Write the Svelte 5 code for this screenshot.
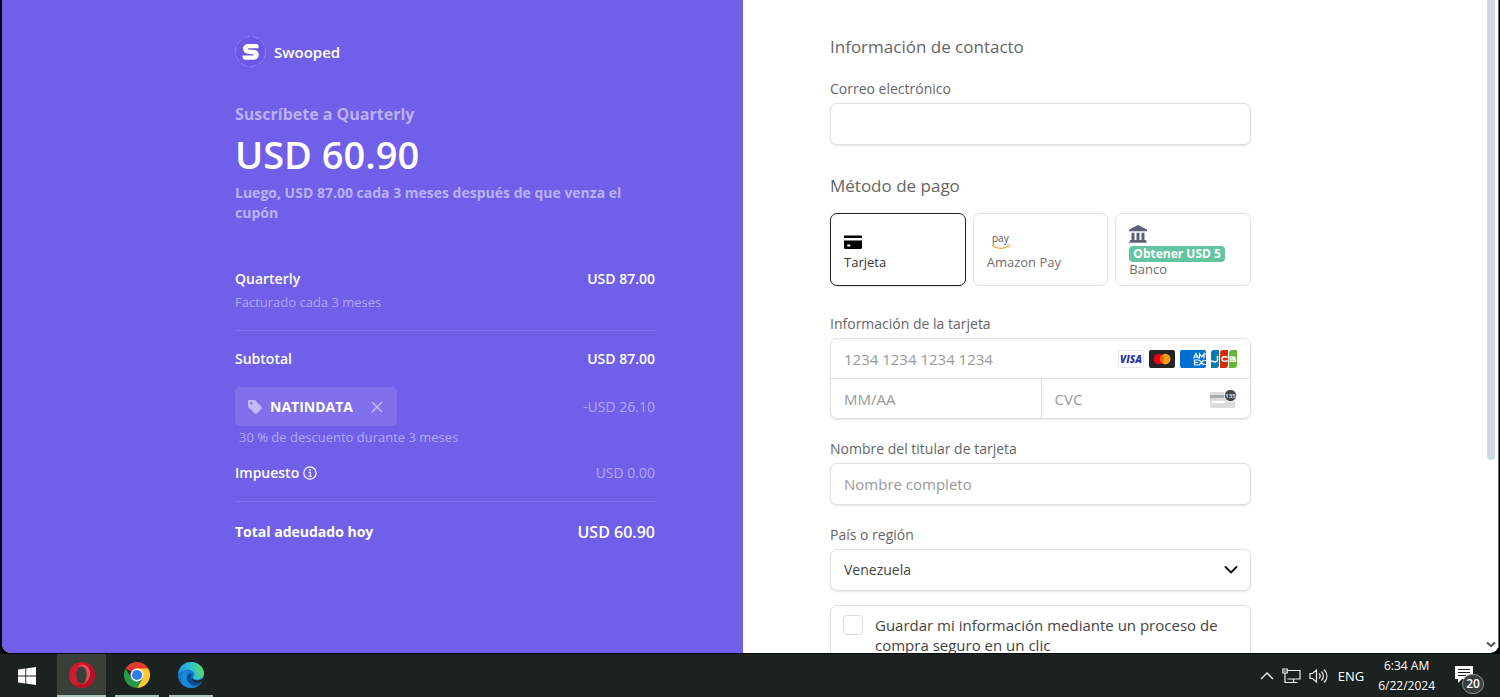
<script>
    const methods = [
        { id: 'card', label: 'Tarjeta' },
        { id: 'amazon', label: 'Amazon Pay' },
        { id: 'bank', label: 'Banco', badge: 'Obtener USD 5' }
    ];

    let selected = 'card';
    let coupon = true;
    let save = false;
</script>

<div class="desktop">
    <main class="window">
        <section class="summary">
            <div class="column">
                <header class="brand">
                    <svg class="brand-logo" viewBox="0 0 31 31" aria-hidden="true">
                        <circle cx="15.500" cy="15.500" r="15" fill="#6b58e6" stroke="#8f80f2" stroke-dasharray="7 2" />
                        <path d="M23.500 12.300H13.800c-1.500 0-1.500 1.100 0 1.200l5.700.5c6 .5 5.600 9.700-.8 9.700H10c-2 0-2.600-1.800-2.400-4.200h10c1.500 0 1.500-1.200 0-1.300l-4.700-.4C6.300 17.200 6.500 8 13.200 8h8c2.200 0 2.700 1.900 2.300 4.300z" fill="#fff" />
                    </svg>
                    <span>Swooped</span>
                </header>

                <h1>Suscríbete a Quarterly</h1>
                <p class="price">USD 60.90</p>
                <p class="then">Luego, USD 87.00 cada 3 meses después de que venza el cupón</p>

                <div class="line item">
                    <span>Quarterly</span>
                    <span>USD 87.00</span>
                </div>
                <p class="note">Facturado cada 3 meses</p>

                <div class="line subtotal">
                    <span>Subtotal</span>
                    <span>USD 87.00</span>
                </div>

                {#if coupon}
                    <div class="line discount">
                        <div class="chip">
                            <svg width="14" height="14" viewBox="0 0 14 14" aria-hidden="true">
                                <path fill-rule="evenodd" d="M0 1.500C0 .7.7 0 1.500 0h4.700c.4 0 .8.2 1.100.5l6.200 6.200c.6.600.6 1.500 0 2.100l-4.700 4.700c-.6.600-1.500.6-2.100 0L.5 7.300C.2 7 0 6.600 0 6.200zM3.300 4.600a1.300 1.300 0 1 0 0-2.600 1.300 1.300 0 0 0 0 2.600z" fill="#c3bbf7" />
                            </svg>
                            <span>NATINDATA</span>
                            <button type="button" aria-label="Quitar cupón" on:click={() => (coupon = false)}>
                                <svg width="12" height="12" viewBox="0 0 12 12">
                                    <path d="M1 1l10 10M11 1L1 11" stroke="#c3bbf7" stroke-width="1.500" fill="none" />
                                </svg>
                            </button>
                        </div>
                        <span>-USD 26.10</span>
                    </div>
                    <p class="note coupon-note">30 % de descuento durante 3 meses</p>
                {/if}

                <div class="line tax">
                    <span class="tax-label">
                        Impuesto
                        <svg width="14" height="14" viewBox="0 0 14 14" aria-hidden="true">
                            <circle cx="7" cy="7" r="6.200" fill="none" stroke="#fff" stroke-width="1.200" />
                            <path d="M5.500 6.200h1.800v3.900M5.300 10.200h3.600" fill="none" stroke="#fff" stroke-width="1.100" />
                            <circle cx="7" cy="4" r=".9" fill="#fff" />
                        </svg>
                    </span>
                    <span class="muted">USD 0.00</span>
                </div>

                <div class="line total">
                    <span>Total adeudado hoy</span>
                    <span class="total-amount">USD 60.90</span>
                </div>
            </div>
        </section>

        <section class="checkout">
            <form class="column">
                <h2>Información de contacto</h2>
                <label class="title" for="email">Correo electrónico</label>
                <input class="box" id="email" type="email" />

                <h2 class="pay-title">Método de pago</h2>
                <div class="methods">
                    {#each methods as method}
                        <button
                            type="button"
                            class="method"
                            class:selected={selected === method.id}
                            aria-pressed={selected === method.id}
                            on:click={() => (selected = method.id)}
                        >
                            {#if method.id === 'card'}
                                <svg width="18" height="18" viewBox="0 0 18 18" aria-hidden="true">
                                    <path d="M0 2.500h18v2.500H0z" />
                                    <path fill-rule="evenodd" d="M0 7.500h18v7.300c0 .7-.5 1.200-1.200 1.200H1.200C.5 16 0 15.500 0 14.800zM3.300 11.500v2h3v-2z" />
                                </svg>
                            {:else if method.id === 'amazon'}
                                <svg class="amazon" width="28" height="18" viewBox="0 0 28 18" aria-hidden="true">
                                    <text x="5" y="9" font-size="10" fill="#4c5664">pay</text>
                                    <path d="M5 12.300c5 3.800 11.500 3.600 16.500.8" fill="none" stroke="#f5a93b" stroke-width="1.300" />
                                    <path d="M19.800 11.900c1.500-.4 3-.3 3.200.1.200.5-.2 1.700-1.100 2.600" fill="none" stroke="#f5a93b" stroke-width=".9" />
                                </svg>
                            {:else}
                                <svg width="18" height="18" viewBox="0 0 18 18" aria-hidden="true">
                                    <path d="M9 0l9 4.500v1.700H0V4.500zM2.500 7.700h3v7.500h-3zM7.500 7.700h3v7.500h-3zM12.500 7.700h3v7.500h-3zM1.200 15h15.600l1.200 2.700H0z" fill="#5d6178" />
                                </svg>
                            {/if}
                            {#if method.badge}
                                <span class="badge">{method.badge}</span>
                            {/if}
                            <span>{method.label}</span>
                        </button>
                    {/each}
                </div>

                <label class="title" for="number">Información de la tarjeta</label>
                <div class="card-fields">
                    <div class="card-row">
                        <input id="number" type="text" placeholder="1234 1234 1234 1234" />
                        <div class="brands">
                            <svg width="26" height="18" viewBox="0 0 26 18" role="img" aria-label="Visa">
                                <rect x=".5" y=".5" width="25" height="17" rx="2" fill="#fff" stroke="#e3e5ea" />
                                <text x="13" y="13" font-size="10" font-weight="800" font-style="italic" text-anchor="middle" fill="#2a35a5">VISA</text>
                            </svg>
                            <svg width="26" height="18" viewBox="0 0 26 18" role="img" aria-label="Mastercard">
                                <rect width="26" height="18" rx="2" fill="#252525" />
                                <circle cx="9.700" cy="9" r="5.200" fill="#eb001b" />
                                <circle cx="16.300" cy="9" r="5.200" fill="#f79e1b" />
                                <path d="M13 5a5.200 5.200 0 0 1 0 8 5.200 5.200 0 0 1 0-8z" fill="#ff5f00" />
                            </svg>
                            <svg width="26" height="18" viewBox="0 0 26 18" role="img" aria-label="American Express">
                                <rect width="26" height="18" rx="2" fill="#016fd0" />
                                <path d="M13.500 8.500L16 3.500l2.500 5M14.500 7h3M19.500 8.500V3.800l2.200 3 2.300-3v4.700M26 4h-2M14.500 15v-5h4M14.500 12.500h3.500M14.500 15h4.500M19 10l5 5M24 10l-5 5M24.500 10.500H26M24.500 14.500H26" fill="none" stroke="#fff" stroke-width="1.200" />
                            </svg>
                            <svg width="26" height="18" viewBox="0 0 26 18" role="img" aria-label="JCB">
                                <path d="M3 0h5v15a3 3 0 0 1-3 3H0V3a3 3 0 0 1 3-3z" fill="#047ab1" />
                                <path d="M12 0h5v15a3 3 0 0 1-3 3H9V3a3 3 0 0 1 3-3z" fill="#d42d06" />
                                <path d="M21 0h5v15a3 3 0 0 1-3 3h-5V3a3 3 0 0 1 3-3z" fill="#67b637" />
                                <path d="M6.500 6v4c0 2-3 2.300-6.500 1M16.500 7.300c-3-1.200-5.600-.8-5.600 1.700s2.600 2.900 5.600 1.700M18.500 7h4c2 0 2 2 0 2h-4 4.500c2 0 2 2.300 0 2.300h-4.500" fill="none" stroke="#fff" stroke-width="1.500" />
                            </svg>
                        </div>
                    </div>
                    <div class="card-row split">
                        <input type="text" placeholder="MM/AA" aria-label="Vencimiento" />
                        <div class="cvc">
                            <input type="text" placeholder="CVC" aria-label="CVC" />
                            <svg width="28" height="20" viewBox="0 0 28 20" aria-hidden="true">
                                <rect x="1" y="3" width="25" height="16" rx="2" fill="#dcdcdc" />
                                <path d="M1 6h25v3H1z" fill="#aaa" />
                                <path d="M3 12h13v2H3z" fill="#fff" />
                                <circle cx="21.500" cy="6.500" r="6.500" fill="#fff" />
                                <circle cx="21.500" cy="6.500" r="5.700" fill="#484848" />
                                <text x="21.500" y="9" font-size="6" font-weight="600" text-anchor="middle" fill="#fff">135</text>
                            </svg>
                        </div>
                    </div>
                </div>

                <label class="title" for="name">Nombre del titular de tarjeta</label>
                <input class="box" id="name" type="text" placeholder="Nombre completo" />

                <label class="title" for="country">País o región</label>
                <div class="select">
                    <select class="box" id="country">
                        <option>Venezuela</option>
                    </select>
                    <svg width="14" height="8" viewBox="0 0 14 8" aria-hidden="true">
                        <path d="M1.500 1L7 6.500 12.500 1" fill="none" stroke="#111" stroke-width="1.800" stroke-linecap="round" />
                    </svg>
                </div>

                <label class="save">
                    <input type="checkbox" bind:checked={save} />
                    <span>Guardar mi información mediante un proceso de compra seguro en un clic</span>
                </label>
            </form>
        </section>

        <div class="scrollbar">
            <div class="thumb"></div>
            <svg width="10" height="7" viewBox="0 0 10 7" aria-hidden="true">
                <path d="M1 1.500l4 3.700 4-3.700" fill="none" stroke="#555" stroke-width="2" />
            </svg>
        </div>
    </main>

    <footer class="taskbar">
        <button class="app" aria-label="Inicio">
            <svg width="18" height="18" viewBox="0 0 18 18">
                <path d="M0 2.600l7.300-1v7H0zM8.200 1.400L18 0v8.600H8.200zM0 9.500h7.300v7L0 15.500zM8.200 9.500H18V18l-9.800-1.400z" fill="#fff" />
            </svg>
        </button>
        <button class="app open active" aria-label="Opera">
            <svg width="26" height="26" viewBox="0 0 26 26">
                <circle cx="13" cy="13" r="13" fill="#d3192c" />
                <path d="M15 .5c14 1 15 24 0 25.300-4 .2-7-1-9-3.300 9 3 15-9 9-22z" fill="#b51226" />
                <path d="M9 4.500c5-4 11-1 12 5 1 8-5 14-11 12 8 0 9-15-1-17z" fill="#ea4c57" />
                <ellipse cx="12.500" cy="13" rx="5.200" ry="8.800" fill="#384039" />
            </svg>
        </button>
        <button class="app open" aria-label="Chrome">
            <svg width="26" height="26" viewBox="0 0 26 26">
                <path d="M13 13L1.740 6.500A13 13 0 0 1 24.260 6.500z" fill="#e33b2e" />
                <path d="M13 6.500h11.260A13 13 0 0 1 13 26l5.600-9.700z" fill="#fcc934" />
                <path d="M1.740 6.500A13 13 0 0 0 13 26l5.600-9.700L13 13l-5.600 3.300z" fill="#269a4b" />
                <circle cx="13" cy="13" r="6.500" fill="#fff" />
                <circle cx="13" cy="13" r="5.100" fill="#2f7de9" />
            </svg>
        </button>
        <button class="app open" aria-label="Edge">
            <svg width="26" height="26" viewBox="0 0 26 26">
                <defs>
                    <linearGradient id="wave" x1="0" y1="0.500" x2="1" y2="0.300">
                        <stop offset="0" stop-color="#1f94dd" />
                        <stop offset=".5" stop-color="#2fc1d6" />
                        <stop offset="1" stop-color="#63d957" />
                    </linearGradient>
                </defs>
                <circle cx="13" cy="13" r="13" fill="#1476cc" />
                <path d="M0 12C1 4 7 0 13 0c8 0 13 6 13 11 0 4-3 6.500-6.500 6.500-3 0-5-1-4-2.500 3-5-3-8-7-7-4 .800-7 2-8.500 4z" fill="url(#wave)" />
                <path d="M9 13c-2 7 3 12 10 11.500-6 3.500-15 .5-16-7C2.500 13 6 9 11 9c-1 1-2 2-2 4z" fill="#1a8bdc" />
                <path d="M12 11.500c-3.500 2-4 6-1 9.500 3 3.300 9 3.500 13-1.500-3 1.500-8 1.500-10-1.500-1.500-2-1-3 .2-5z" fill="#0b4a94" />
                <path d="M15 16c-.8 1.300 1.500 2.600 4.500 2.500 3 0 5.500-1.500 6.500-4.500 0 2-.6 4-1.800 5.500-3 1.500-7.200 1.300-9.200-.5-1-1-1-2 0-3z" fill="#1d211e" />
            </svg>
        </button>

        <div class="tray">
            <svg width="14" height="8" viewBox="0 0 14 8" aria-hidden="true">
                <path d="M1 7l6-6 6 6" fill="none" stroke="#eee" stroke-width="1.400" />
            </svg>
            <svg width="19" height="16" viewBox="0 0 19 16" aria-hidden="true">
                <path d="M6 2.500h12v8.500H5.500M11.500 11v3.500M7.500 14.500h8" fill="none" stroke="#eee" stroke-width="1.200" />
                <path d="M.8 1h4.500v4H.8zM3 5v9.500h5M1.800 3h2.500" fill="none" stroke="#eee" stroke-width="1.200" />
            </svg>
            <svg width="19" height="16" viewBox="0 0 19 16" aria-hidden="true">
                <path d="M1 5.500h2.500L7.500 2v12l-4-3.500H1zM10 5.500c1.500 1.500 1.500 3.500 0 5M12.500 3.500c2.500 2.500 2.500 6.500 0 9M15 1.500c4 4 4 9 0 13" fill="none" stroke="#eee" stroke-width="1.200" />
            </svg>
            <span class="lang">ENG</span>
            <time>6:34 AM<br />6/22/2024</time>
            <div class="alerts">
                <svg width="18" height="17" viewBox="0 0 18 17" aria-hidden="true">
                    <path d="M0 0h18v13H7l-4 4v-4H0z" fill="#fff" />
                    <path d="M3 3.500h12M3 6.500h12M3 9.500h8" stroke="#1c221f" stroke-width="1.200" />
                </svg>
                <span class="count">20</span>
            </div>
        </div>
    </footer>
</div>

<style>
    :global(body) {
        background: #05060a;
    }
    .desktop {
        display: flex;
        flex-direction: column;
        height: 100vh;
        overflow: hidden;
        font-family: "Open Sans", "Noto Sans", sans-serif;
        font-size: 14px;
        line-height: 20px;
    }
    .desktop * {
        box-sizing: border-box;
    }
    h1, h2, p {
        margin: 0;
    }
    button, input, select {
        font: inherit;
    }
    svg {
        flex: none;
    }

    .window {
        display: flex;
        flex: 1;
        min-height: 0;
        margin: 0 1px 1px 2px;
        overflow: hidden;
        background: #fff;
        border-radius: 0 0 9px 9px;
    }
    .summary, .checkout {
        display: flex;
        flex: 1;
        min-width: 0;
    }
    .summary {
        justify-content: flex-end;
        padding: 36px 88px 0 24px;
        background: #705fe8;
        color: #fff;
    }
    .checkout {
        padding: 35px 24px 0 87px;
        color: #666;
    }
    .column {
        width: 100%;
        max-width: 420px;
    }
    form.column {
        max-width: 421px;
    }

    /* order summary */
    .brand {
        display: flex;
        align-items: center;
        gap: 8px;
        font-size: 15px;
        font-weight: 600;
    }
    .brand-logo {
        width: 31px;
        height: 31px;
    }
    h1 {
        margin-top: 35px;
        color: #bab1f6;
        font-size: 16px;
        font-weight: 700;
        line-height: 24px;
    }
    .price {
        margin-top: 4px;
        font-size: 38px;
        font-weight: 600;
        line-height: 48px;
    }
    .then {
        margin-top: 5px;
        color: #bab1f6;
        font-weight: 700;
    }
    .line {
        display: flex;
        align-items: center;
        justify-content: space-between;
        font-weight: 600;
    }
    .item {
        margin-top: 46px;
    }
    .note {
        margin-top: 3px;
        color: #b3a9f5;
        font-size: 13px;
    }
    .subtotal {
        margin-top: 18px;
        padding-top: 18px;
        border-top: 1px solid #8071ee;
    }
    .discount {
        margin-top: 18px;
        color: #b3a9f5;
        font-weight: 400;
    }
    .chip {
        display: flex;
        align-items: center;
        gap: 8px;
        height: 39px;
        padding: 0 14px 0 13px;
        background: #8070eb;
        border-radius: 5px;
        color: #fff;
        font-weight: 700;
    }
    .chip button {
        display: flex;
        margin-left: 10px;
        padding: 0;
        background: none;
        border: 0;
        cursor: pointer;
    }
    .coupon-note {
        margin-top: 1px;
        padding-left: 4px;
    }
    .tax {
        margin-top: 16px;
        font-weight: 400;
    }
    .tax-label {
        display: flex;
        align-items: center;
        gap: 4px;
        font-weight: 600;
    }
    .muted {
        color: #b3a9f5;
    }
    .total {
        margin-top: 18px;
        padding-top: 20px;
        border-top: 1px solid #8071ee;
        font-weight: 700;
    }
    .total-amount {
        font-size: 16px;
        font-weight: 600;
    }

    /* payment form */
    h2 {
        font-size: 17px;
        font-weight: 500;
        line-height: 24px;
    }
    .title {
        display: block;
        margin: 20px 0 4px;
    }
    .pay-title {
        margin-top: 29px;
    }
    .box {
        display: block;
        width: 100%;
        height: 42px;
        padding: 0 13px;
        background: #fff;
        border: 1px solid #e0e0e0;
        border-radius: 7px;
        box-shadow: 0 1px 2px #0000001a;
        color: #444;
        appearance: none;
    }
    form input {
        font-size: 15px;
    }
    input::placeholder {
        color: #999;
        opacity: 1;
    }
    .methods {
        display: grid;
        grid-template-columns: repeat(3, 1fr);
        gap: 7px;
        margin: 15px 0 28px;
    }
    .method {
        display: flex;
        flex-direction: column;
        align-items: flex-start;
        justify-content: center;
        gap: 3px;
        height: 73px;
        padding: 3px 13px 0;
        background: #fff;
        border: 1px solid #e4e4e4;
        border-radius: 7px;
        color: #707070;
        font-size: 13px;
        line-height: 16px;
        cursor: pointer;
    }
    .method.selected {
        border-color: #222;
        box-shadow: 0 1px 2px #0000001a;
        color: #333;
    }
    .amazon {
        overflow: visible;
    }
    .badge {
        padding: 0 4px;
        background: #62c5a0;
        border-radius: 4px;
        color: #fff;
        font-size: 12px;
        font-weight: 700;
    }
    .badge + span {
        margin-top: -4px;
    }
    .card-fields {
        overflow: hidden;
        border: 1px solid #e0e0e0;
        border-radius: 7px;
        box-shadow: 0 1px 2px #0000001a;
    }
    .card-row {
        display: flex;
        align-items: center;
        height: 39px;
    }
    .card-row input {
        flex: 1;
        min-width: 0;
        height: 100%;
        padding: 0 13px;
        background: none;
        border: 0;
    }
    .brands {
        display: flex;
        gap: 5px;
        padding-right: 13px;
    }
    .split {
        display: grid;
        grid-template-columns: 1fr 1fr;
        height: 40px;
        border-top: 1px solid #e0e0e0;
    }
    .cvc {
        display: flex;
        align-items: center;
        height: 100%;
        min-width: 0;
        padding-right: 13px;
        border-left: 1px solid #e0e0e0;
    }
    .select {
        display: grid;
        align-items: center;
    }
    .select > * {
        grid-area: 1 / 1;
    }
    .select svg {
        justify-self: end;
        margin-right: 13px;
        pointer-events: none;
    }
    .save {
        display: flex;
        align-items: flex-start;
        gap: 12px;
        margin-top: 14px;
        padding: 9px 12px 20px;
        border: 1px solid #e0e0e0;
        border-radius: 7px;
        color: #444;
        font-size: 15px;
        font-weight: 500;
    }
    .save input {
        flex: none;
        width: 20px;
        height: 20px;
        margin: 0;
        background: #fff;
        border: 1px solid #dcdcdc;
        border-radius: 4px;
        appearance: none;
    }
    .save input:checked {
        background: #705fe8;
    }

    .scrollbar {
        display: flex;
        flex-direction: column;
        align-items: center;
        justify-content: space-between;
        width: 16px;
        padding: 0 2px 5px 3px;
        border-right: 1px solid #666;
    }
    .thumb {
        width: 8px;
        height: 71%;
        background: #d0dae4;
        border-radius: 0 0 4px 4px;
    }

    /* taskbar */
    .taskbar {
        display: flex;
        height: 43px;
        padding: 0 17px 0 1px;
        background: #1c221f;
        color: #fff;
    }
    .app {
        display: flex;
        align-items: center;
        justify-content: center;
        width: 52px;
        margin-right: 3px;
        padding: 0;
        background: none;
        border: 0;
    }
    .open {
        width: 44px;
        margin: 0 5px;
        border-bottom: 2px solid #a9c4b4;
    }
    .active {
        width: 49px;
        margin: 0 4px 0 1px;
        background: #384039;
    }
    .tray {
        display: flex;
        align-items: center;
        gap: 8px;
        margin-left: auto;
        font-size: 12px;
    }
    .lang {
        margin-left: 2px;
        font-size: 13px;
    }
    .tray time {
        margin: 0 12px 0 6px;
        text-align: center;
    }
    .alerts {
        position: relative;
        width: 28px;
        height: 20px;
    }
    .count {
        position: absolute;
        top: 8px;
        left: 7px;
        width: 22px;
        height: 20px;
        background: #3a403d;
        border: 1px solid #8b918e;
        border-radius: 10px;
        font-weight: 600;
        line-height: 18px;
        text-align: center;
    }
</style>
